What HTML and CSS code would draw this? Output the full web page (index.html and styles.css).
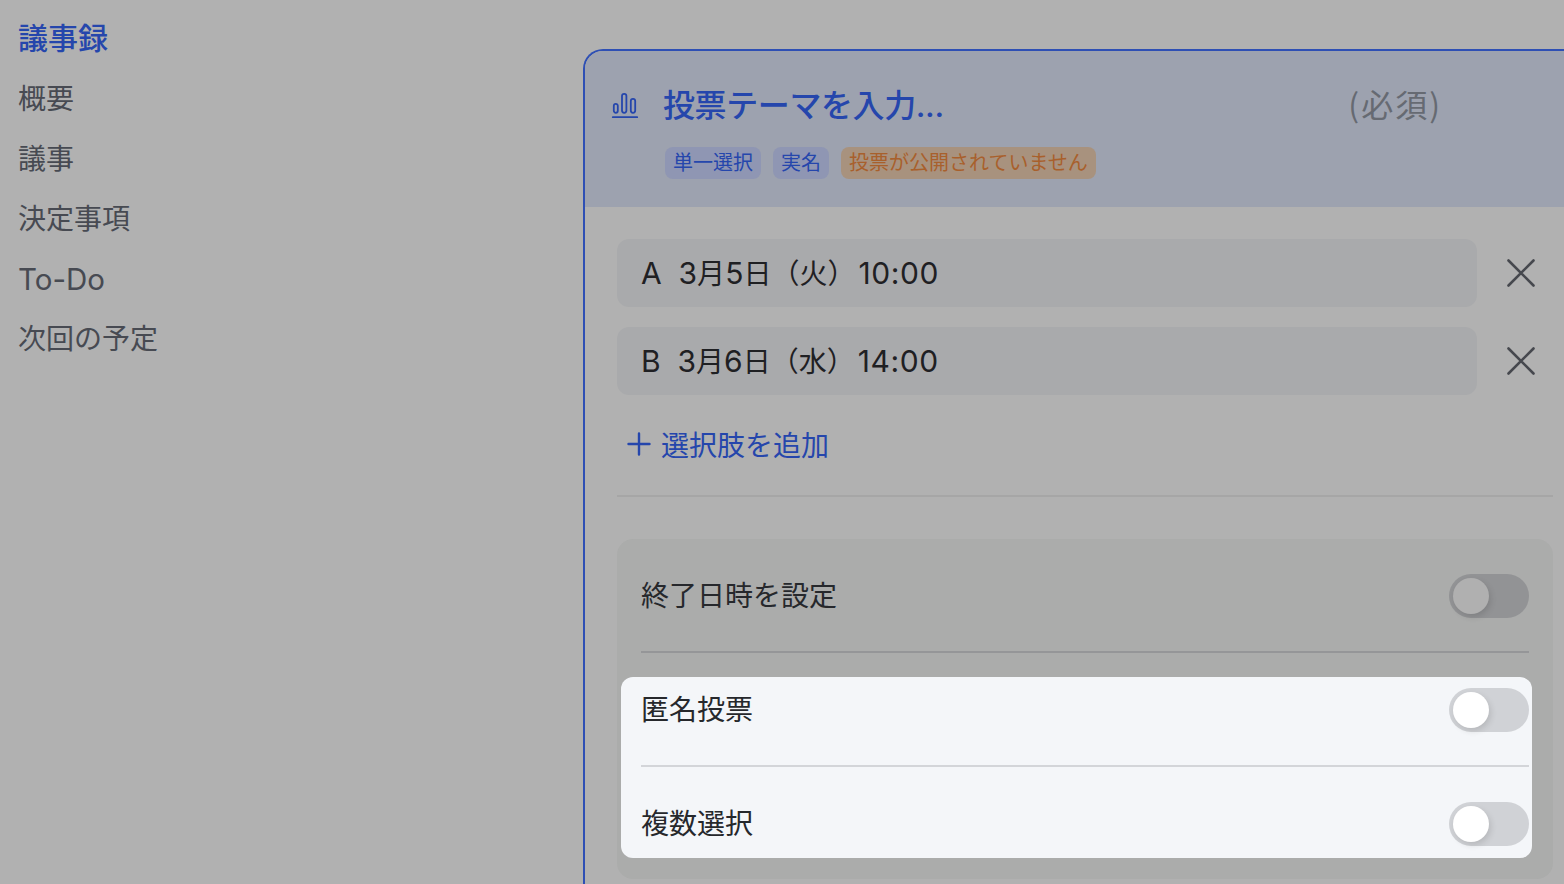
FILE: index.html
```html
<!DOCTYPE html>
<html lang="ja">
<head>
  <meta charset="utf-8">
  <title>議事録</title>
  <link rel="stylesheet" href="styles.css">
</head>
<body>
  <nav class="outline">
    <div class="outline-title">議事録</div>
    <div class="outline-item">概要</div>
    <div class="outline-item">議事</div>
    <div class="outline-item">決定事項</div>
    <div class="outline-item outline-latin">To-Do</div>
    <div class="outline-item">次回の予定</div>
  </nav>

  <main class="vote-panel">
    <header class="vote-head">
      <div class="vote-title-row">
        <svg class="vote-icon" width="28" height="28" viewBox="0 0 28 28" fill="none" stroke="#2546ac" stroke-width="1.8" stroke-linecap="round">
          <rect x="2.8" y="12.8" width="4" height="9" rx="2"/>
          <rect x="11" y="2.8" width="4.4" height="19" rx="2.2"/>
          <rect x="19.8" y="7.8" width="4.4" height="14" rx="2.2"/>
          <path d="M1.8 26.2h24.4"/>
        </svg>
        <span class="vote-title">投票テーマを入力...</span>
        <span class="vote-required">(必須)</span>
      </div>
      <div class="tags">
        <span class="tag">単一選択</span>
        <span class="tag">実名</span>
        <span class="tag tag-warn">投票が公開されていません</span>
      </div>
    </header>

    <section class="vote-body">
      <div class="option-row">
        <div class="option"><span class="latin">A&nbsp; 3</span>月<span class="latin">5</span>日（火）<span class="latin time">10:00</span></div>
        <svg class="option-remove" width="28" height="28" viewBox="0 0 28 28" stroke="#46484e" stroke-width="2.6" stroke-linecap="round"><path d="M1.5 1.5l25 25M26.5 1.5l-25 25"/></svg>
      </div>
      <div class="option-row">
        <div class="option"><span class="latin">B&nbsp; 3</span>月<span class="latin">6</span>日（水）<span class="latin time">14:00</span></div>
        <svg class="option-remove" width="28" height="28" viewBox="0 0 28 28" stroke="#46484e" stroke-width="2.6" stroke-linecap="round"><path d="M1.5 1.5l25 25M26.5 1.5l-25 25"/></svg>
      </div>
      <div class="add-option">
        <svg width="24" height="24" viewBox="0 0 24 24" stroke="#2546ac" stroke-width="2.4" stroke-linecap="round"><path d="M12 1.5v21M1.5 12h21"/></svg>
        <span>選択肢を追加</span>
      </div>
      <div class="body-divider"></div>

      <div class="settings">
        <div class="setting setting-first">
          <span class="setting-label">終了日時を設定</span>
          <span class="toggle toggle-dim"><span class="knob"></span></span>
        </div>
        <div class="spotlight">
          <div class="setting setting-top">
            <span class="setting-label">匿名投票</span>
            <span class="toggle"><span class="knob"></span></span>
          </div>
          <div class="setting setting-last">
            <span class="setting-label">複数選択</span>
            <span class="toggle"><span class="knob"></span></span>
          </div>
        </div>
      </div>
    </section>
  </main>
</body>
</html>
```

FILE: styles.css
```css
html, body {
  height: 100%;
}
body {
  margin: 0;
  display: flex;
  overflow: hidden;
  background-color: #b1b1b1;
  font-family: "Inter", "Noto Sans CJK JP", sans-serif;
  color: #1f2023;
}

/* left outline */
.outline {
  width: 583px;
  flex-shrink: 0;
  padding: 16px 0 0 18px;
  box-sizing: border-box;
}
.outline-title {
  height: 44px;
  line-height: 44px;
  font-size: 30px;
  font-weight: 500;
  color: #2546ac;
}
.outline-item {
  height: 60px;
  line-height: 60px;
  font-size: 28px;
  color: #474a52;
}
.outline-title + .outline-item {
  margin-top: 9px;
}
.outline-latin {
  font-size: 29.5px;
}

/* vote panel */
.vote-panel {
  flex: 1;
  min-width: 0;
  margin-top: 49px;
  border: 2px solid #2e4fb4;
  border-right: none;
  border-bottom: none;
  border-top-left-radius: 20px;
}
.vote-head {
  height: 156px;
  box-sizing: border-box;
  padding: 29px 0 0 26px;
  background-color: #9da2af;
  border-top-left-radius: 18px;
}
.vote-title-row {
  display: flex;
  align-items: center;
  height: 46px;
}
.vote-icon {
  flex-shrink: 0;
  margin: 3px 24px 0 0;
}
.vote-title {
  flex: 1;
  font-size: 32px;
  font-weight: 500;
  letter-spacing: -0.4px;
  color: #2546ac;
}
.vote-required {
  margin-right: 122px;
  font-family: "Noto Sans CJK JP", sans-serif;
  font-size: 32px;
  letter-spacing: 2px;
  color: #666a72;
}
.tags {
  display: flex;
  gap: 12px;
  margin: 21px 0 0 54px;
}
.tag {
  height: 32px;
  line-height: 32px;
  padding: 0 8px;
  border-radius: 8px;
  font-size: 20px;
  color: #2546ac;
  background-color: #8f96b3;
}
.tag-warn {
  color: #a8602c;
  background-color: #a8927e;
}

.vote-body {
  padding: 32px 11px 0 32px;
}
.option-row {
  display: flex;
  align-items: center;
  margin-bottom: 20px;
}
.option {
  width: 860px;
  height: 68px;
  line-height: 68px;
  box-sizing: border-box;
  padding-left: 24px;
  border-radius: 12px;
  font-size: 28px;
  background-color: #a9aaac;
}
.latin {
  font-size: 30px;
}
.time {
  margin-left: 3px;
  letter-spacing: 0.6px;
}
.option-remove {
  margin-left: 30px;
}
.add-option {
  display: flex;
  align-items: center;
  gap: 10px;
  height: 40px;
  margin: 29px 0 0 10px;
  font-size: 28px;
  color: #2546ac;
}
.body-divider {
  height: 2px;
  margin-top: 31px;
  background-color: #a6a6a6;
}

/* settings card */
.settings {
  margin-top: 42px;
  padding: 0 24px 21px;
  border-radius: 16px;
  background-color: #abacab;
}
.setting {
  display: flex;
  align-items: center;
  justify-content: space-between;
  font-size: 28px;
  color: #26282c;
}
.setting-label {
  margin-bottom: 4px;
}
.setting-first {
  padding: 35px 0 33px;
  border-bottom: 2px solid #959698;
}
.spotlight {
  margin: 24px -3px 0 -20px;
  padding: 0 3px 12px 20px;
  border-radius: 12px;
  background-color: #f4f6f9;
}
.setting-top {
  padding: 11px 0 33px;
  border-bottom: 2px solid #d3d5d9;
}
.setting-last {
  padding-top: 35px;
}
.toggle {
  display: block;
  width: 80px;
  height: 44px;
  box-sizing: border-box;
  padding: 4px;
  border-radius: 22px;
  background-color: #d0d2d6;
}
.knob {
  display: block;
  width: 36px;
  height: 36px;
  border-radius: 50%;
  background-color: #fff;
  box-shadow: 2px 3px 6px rgba(0, 0, 0, 0.12);
}
.toggle-dim {
  background-color: #929395;
}
.toggle-dim .knob {
  background-color: #b0b0b0;
}
```
